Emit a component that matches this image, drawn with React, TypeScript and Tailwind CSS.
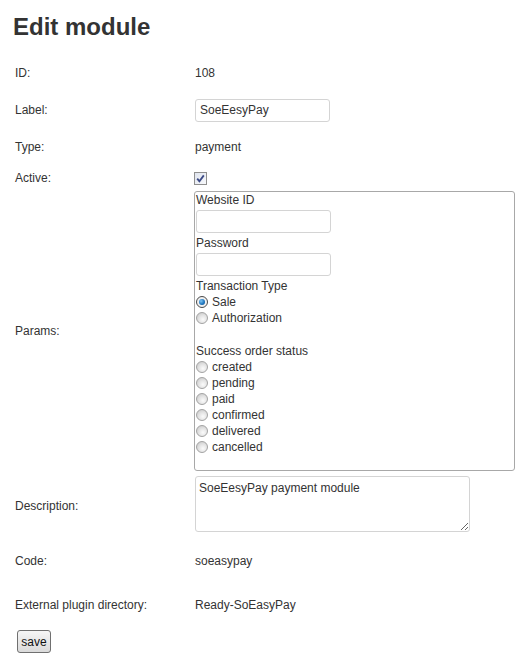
import React from "react";

function Radio({ checked }: { checked?: boolean }) {
  if (checked) {
    return (
      <span className="inline-flex w-[12px] h-[12px] shrink-0 rounded-full border border-[#4a4a4a] bg-[#f0f0f0] items-center justify-center">
        <span className="block w-[6px] h-[6px] rounded-full bg-[radial-gradient(circle_at_35%_35%,#7fc3f0_0%,#1f77c0_55%,#0b4a86_100%)]" />
      </span>
    );
  }
  return (
    <span className="inline-block w-[12px] h-[12px] shrink-0 rounded-full border border-[#a3a3a3] bg-[radial-gradient(circle_at_60%_65%,#fbfbfb_0%,#e4e4e4_45%,#c2c2c2_100%)]" />
  );
}

function RadioRow({ label, checked }: { label: string; checked?: boolean }) {
  return (
    <div className="flex items-center h-[16px]">
      <Radio checked={checked} />
      <span className="ml-[4px] leading-[16px]">{label}</span>
    </div>
  );
}

function Row({
  label,
  h,
  children,
  labelClass = "",
  alignTop = false,
}: {
  label: string;
  h: string;
  children?: React.ReactNode;
  labelClass?: string;
  alignTop?: boolean;
}) {
  return (
    <div className={`flex items-center ${h}`}>
      <div className={`w-[194px] shrink-0 pl-[15px] leading-[16px] ${labelClass}`}>{label}</div>
      <div className={`flex-1 ${alignTop ? "self-start" : ""}`}>{children}</div>
    </div>
  );
}

const inputCls =
  "block w-[135px] h-[23px] border border-[#d4d4d4] rounded-[3px] bg-white px-[4px] text-[12px] text-[#333] outline-none font-['Liberation_Sans',Arial,sans-serif]";

export default function App() {
  return (
    <div className="w-[529px] h-[659px] bg-white text-[#333] text-[12px] font-['Liberation_Sans',Arial,sans-serif]">
      <h1 className="pt-[13px] pl-[13px] text-[24px] leading-[28px] font-bold text-[#333]">Edit module</h1>
      <div className="mt-[14px]">
        <Row label="ID:" h="h-[36px]">
          <span className="pl-[1px] leading-[16px]">108</span>
        </Row>
        <Row label="Label:" h="h-[38px]">
          <input className={`${inputCls} ml-[1px]`} defaultValue="SoeEesyPay" readOnly />
        </Row>
        <Row label="Type:" h="h-[36px]">
          <span className="pl-[1px] leading-[16px]">payment</span>
        </Row>
        <Row label="Active:" h="h-[26px]">
          <span className="flex w-[13px] h-[13px] border border-[#8f8f8f] bg-linear-to-br from-[#dfe4ee] to-[#f8f9fb] items-center justify-center">
            <svg width="11" height="11" viewBox="0 0 11 11">
              <path d="M2.2 5.6 L4.4 8.2 L8.8 2.4" fill="none" stroke="#3b4a86" strokeWidth="1.8" />
            </svg>
          </span>
        </Row>
        <Row label="Params:" h="h-[280px]">
          <div className="w-[321px] h-[280px] border border-[#a8a8a8] rounded-[3px] pl-[1px] leading-[16px]">
            <div className="h-[16px]">Website ID</div>
            <input className={`${inputCls} mt-[2px] mb-[2px] h-[22px]`} readOnly />
            <div className="h-[16px]">Password</div>
            <input className={`${inputCls} mt-[2px] mb-[2px] h-[22px]`} readOnly />
            <div className="h-[16px]">Transaction Type</div>
            <RadioRow label="Sale" checked />
            <RadioRow label="Authorization" />
            <div className="h-[17px]" />
            <div className="h-[16px]">Success order status</div>
            <RadioRow label="created" />
            <RadioRow label="pending" />
            <RadioRow label="paid" />
            <RadioRow label="confirmed" />
            <RadioRow label="delivered" />
            <RadioRow label="cancelled" />
          </div>
        </Row>
        <div className="h-[5px]" />
        <Row label="Description:" h="h-[60px]" alignTop>
          <textarea
            className="block w-[275px] h-[56px] ml-[1px] border border-[#d4d4d4] rounded-[3px] bg-white px-[3px] py-[3px] text-[12px] leading-[16px] text-[#333] outline-none font-['Liberation_Sans',Arial,sans-serif]"
            defaultValue="SoeEesyPay payment module"
            readOnly
          />
        </Row>
        <Row label="Code:" h="h-[50px]">
          <span className="pl-[1px] leading-[16px]">soeasypay</span>
        </Row>
        <Row label="External plugin directory:" h="h-[38px]">
          <span className="pl-[1px] leading-[16px]">Ready-SoEasyPay</span>
        </Row>
        <div className="pl-[17px] pt-[6px]">
          <button className="w-[34px] h-[23px] border border-[#707070] rounded-[3px] bg-linear-to-b from-[#f6f6f6] to-[#dadada] text-[12px] text-[#111] leading-[16px] font-['Liberation_Sans',Arial,sans-serif]">
            save
          </button>
        </div>
      </div>
    </div>
  );
}
